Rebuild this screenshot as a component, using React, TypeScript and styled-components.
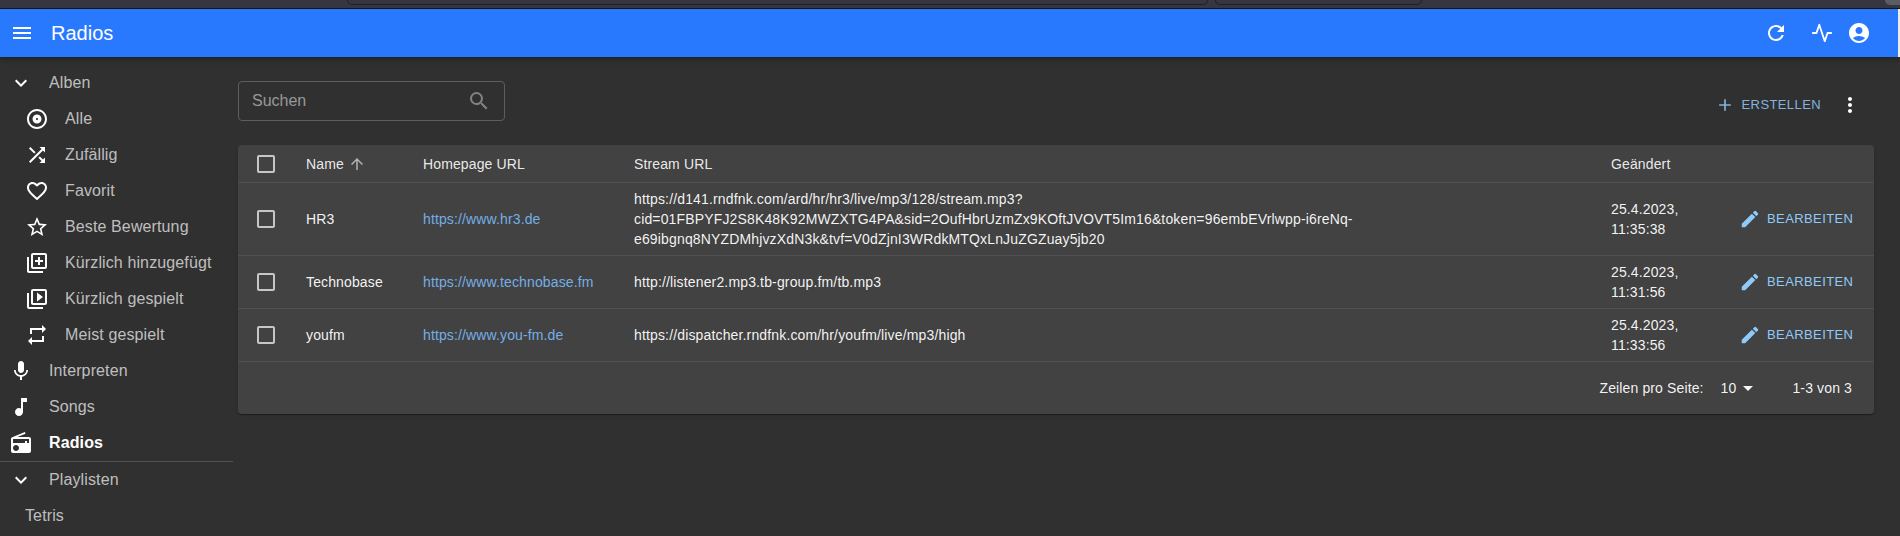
import React from "react";
import styled, { createGlobalStyle } from "styled-components";
import {
  MdMenu, MdRefresh, MdAccountCircle, MdExpandMore, MdOutlineAlbum, MdShuffle, MdFavoriteBorder,
  MdStarBorder, MdOutlineLibraryAdd, MdOutlineVideoLibrary, MdRepeat, MdMic, MdMusicNote, MdRadio,
  MdSearch, MdAdd, MdMoreVert, MdCheckBoxOutlineBlank, MdArrowUpward, MdEdit, MdArrowDropDown,
} from "react-icons/md";
import { FiActivity } from "react-icons/fi";

const Global = createGlobalStyle`
  html, body { margin: 0; padding: 0; height: 100%; overflow: hidden; background: #303030; }
  body { font-family: "Liberation Sans", Arial, sans-serif; color: #fff; }
  #root { height: 100%; }
`;

const Page = styled.div`
  height: 536px;
  display: flex;
  flex-direction: column;
  overflow: hidden;
`;

const BrowserStrip = styled.div`
  height: 8px;
  flex: none;
  background: #35363f;
  border-bottom: 1px solid #17181c;
  display: flex;
  align-items: flex-start;
  padding-left: 347px;
  gap: 7px;
  position: relative;
`;

const BrowserTab = styled.div<{ $w: number }>`
  width: ${(p) => p.$w}px;
  height: 5px;
  box-sizing: border-box;
  border: 1px solid #1f2026;
  border-top: none;
  border-radius: 0 0 5px 5px;
`;

const CornerShape = styled.span`
  position: absolute;
  top: 0;
  right: 0;
  width: 15px;
  height: 5px;
  background: #5c5d62;
  border-bottom-left-radius: 12px;
`;

const AppBar = styled.header`
  height: 48px;
  flex: none;
  background: #2979ff;
  border-right: 2px solid #ececec;
  display: flex;
  align-items: center;
  padding: 0 27px 0 10px;
  box-shadow: 0 2px 4px -1px rgba(0, 0, 0, 0.2), 0 4px 5px 0 rgba(0, 0, 0, 0.14);
  position: relative;
  z-index: 2;
`;

const Title = styled.h1`
  margin: 0 0 0 17px;
  font-size: 20px;
  font-weight: 400;
  line-height: 1;
  flex: 1;
`;

const BarIcon = styled.span<{ $gap?: number }>`
  display: flex;
  margin-left: ${(p) => p.$gap ?? 0}px;
  font-size: 24px;
`;

const Body = styled.div`
  flex: 1;
  display: flex;
  min-height: 0;
`;

const Sidebar = styled.nav`
  width: 233px;
  flex: none;
  padding-top: 8px;
`;

const MenuRow = styled.div<{ $nested?: boolean; $active?: boolean }>`
  height: 36px;
  display: flex;
  align-items: center;
  padding-left: ${(p) => (p.$nested ? 25 : 9)}px;
  font-size: 16px;
  letter-spacing: 0.12px;
  font-weight: ${(p) => (p.$active ? 700 : 400)};
  color: ${(p) => (p.$active ? "#fff" : "rgba(255,255,255,0.7)")};
  svg { flex: none; width: 24px; height: 24px; margin-right: 16px; color: #fff; }
`;

const PlainRow = styled(MenuRow)`
  padding-left: 25px;
`;

const SideDivider = styled.div`
  height: 1px;
  background: #515151;
`;

const Main = styled.main`
  flex: 1;
  min-width: 0;
  padding: 24px 26px 0 5px;
`;

const Actions = styled.div`
  height: 64px;
  display: flex;
  align-items: flex-start;
  justify-content: space-between;
`;

const SearchBox = styled.div`
  width: 267px;
  height: 40px;
  box-sizing: border-box;
  border: 1px solid #5e5e5e;
  border-radius: 4px;
  display: flex;
  align-items: center;
  justify-content: space-between;
  padding: 0 13px 0 13px;
  color: rgba(255, 255, 255, 0.5);
  font-size: 16px;
  svg { width: 24px; height: 24px; color: rgba(255,255,255,0.4); }
`;

const ToolRow = styled.div`
  display: flex;
  align-items: center;
  height: 47px;
`;

const TextButton = styled.span`
  display: flex;
  align-items: center;
  color: #90caf9;
  font-size: 13px;
  letter-spacing: 0.4px;
  text-transform: uppercase;
`;

const CreateButton = styled(TextButton)`
  gap: 7px;
  opacity: 0.85;
  margin-right: 17px;
  svg { width: 20px; height: 20px; }
`;

const EditButton = styled(TextButton)`
  gap: 6px;
  svg { width: 22px; height: 22px; }
`;

const Dots = styled.span`
  display: flex;
  margin-right: 12px;
  svg { width: 24px; height: 24px; color: #fff; }
`;

const Card = styled.section`
  background: #424242;
  border-radius: 4px;
  overflow: hidden;
  box-shadow: 0 2px 1px -1px rgba(0,0,0,.2), 0 1px 1px 0 rgba(0,0,0,.14), 0 1px 3px 0 rgba(0,0,0,.12);
`;

const Table = styled.table`
  width: 100%;
  border-collapse: collapse;
  table-layout: fixed;
  font-size: 14px;
  letter-spacing: 0.13px;
`;

const HeadCell = styled.th`
  height: 37px;
  padding: 0;
  text-align: left;
  font-weight: 400;
  color: rgba(255,255,255,0.9);
  border-bottom: 1px solid #515151;
  line-height: 1;
  vertical-align: middle;
`;

const Cell = styled.td`
  padding: 0;
  line-height: 20px;
  color: rgba(255,255,255,0.95);
  border-bottom: 1px solid #515151;
  vertical-align: middle;
`;

const BoxCell = styled(Cell)`
  padding-left: 16px;
  line-height: 0;
`;

const BoxHead = styled(HeadCell)`
  padding-left: 16px;
  line-height: 0;
`;

const Check = styled(MdCheckBoxOutlineBlank)`
  width: 24px;
  height: 24px;
  color: rgba(255,255,255,0.7);
`;

const Sort = styled.span`
  display: inline-flex;
  align-items: center;
  gap: 4px;
  svg { width: 18px; height: 18px; color: rgba(255,255,255,0.6); }
`;

const Link = styled.a`
  color: #75aee6;
  text-decoration: none;
`;

const Footer = styled.div`
  height: 52px;
  display: flex;
  align-items: center;
  justify-content: flex-end;
  padding-right: 22px;
  font-size: 14px;
  letter-spacing: 0.13px;
  color: rgba(255,255,255,0.95);
`;

const PageSize = styled.span`
  display: inline-flex;
  align-items: center;
  margin: 0 32px 0 17px;
  svg { width: 24px; height: 24px; }
`;

const nav: [React.ComponentType, string, boolean][] = [
  [MdOutlineAlbum, "Alle", true],
  [MdShuffle, "Zufällig", true],
  [MdFavoriteBorder, "Favorit", true],
  [MdStarBorder, "Beste Bewertung", true],
  [MdOutlineLibraryAdd, "Kürzlich hinzugefügt", true],
  [MdOutlineVideoLibrary, "Kürzlich gespielt", true],
  [MdRepeat, "Meist gespielt", true],
  [MdMic, "Interpreten", false],
  [MdMusicNote, "Songs", false],
];

const rows = [
  {
    name: "HR3",
    home: "https://www.hr3.de",
    stream: "https://d141.rndfnk.com/ard/hr/hr3/live/mp3/128/stream.mp3?cid=01FBPYFJ2S8K48K92MWZXTG4PA&sid=2OufHbrUzmZx9KOftJVOVT5Im16&token=96embEVrlwpp-i6reNq-e69ibgnq8NYZDMhjvzXdN3k&tvf=V0dZjnI3WRdkMTQxLnJuZGZuay5jb20",
    date: "25.4.2023, 11:35:38",
  },
  { name: "Technobase", home: "https://www.technobase.fm", stream: "http://listener2.mp3.tb-group.fm/tb.mp3", date: "25.4.2023, 11:31:56" },
  { name: "youfm", home: "https://www.you-fm.de", stream: "https://dispatcher.rndfnk.com/hr/youfm/live/mp3/high", date: "25.4.2023, 11:33:56" },
];

const RowShell = styled.tr<{ $h: number }>`
  height: ${(p) => p.$h}px;
`;

const Stream = styled.div`
  width: 780px;
  overflow-wrap: anywhere;
  letter-spacing: 0.15px;
`;

const DateText = styled.div`
  width: 90px;
`;

export default function App() {
  return (
    <Page>
      <Global />
      <BrowserStrip>
        <BrowserTab $w={861} />
        <BrowserTab $w={207} />
        <CornerShape />
      </BrowserStrip>
      <AppBar>
        <BarIcon><MdMenu /></BarIcon>
        <Title>Radios</Title>
        <BarIcon><MdRefresh /></BarIcon>
        <BarIcon $gap={23}><FiActivity size={22} /></BarIcon>
        <BarIcon $gap={14}><MdAccountCircle /></BarIcon>
      </AppBar>
      <Body>
        <Sidebar>
          <MenuRow><MdExpandMore />Alben</MenuRow>
          {nav.map(([I, label, nested]) => (
            <MenuRow key={label} $nested={nested}><I />{label}</MenuRow>
          ))}
          <MenuRow $active><MdRadio />Radios</MenuRow>
          <SideDivider />
          <MenuRow><MdExpandMore />Playlisten</MenuRow>
          <PlainRow>Tetris</PlainRow>
        </Sidebar>
        <Main>
          <Actions>
            <SearchBox>Suchen<MdSearch /></SearchBox>
            <ToolRow>
              <CreateButton><MdAdd />Erstellen</CreateButton>
              <Dots><MdMoreVert /></Dots>
            </ToolRow>
          </Actions>
          <Card>
            <Table>
              <colgroup>
                <col width={68} />
                <col width={117} />
                <col width={211} />
                <col width={977} />
                <col width={128} />
                <col />
              </colgroup>
              <thead>
                <tr>
                  <BoxHead><Check /></BoxHead>
                  <HeadCell><Sort>Name<MdArrowUpward /></Sort></HeadCell>
                  <HeadCell>Homepage URL</HeadCell>
                  <HeadCell>Stream URL</HeadCell>
                  <HeadCell>Geändert</HeadCell>
                  <HeadCell />
                </tr>
              </thead>
              <tbody>
                {rows.map((r, i) => (
                  <RowShell key={r.name} $h={i === 0 ? 73 : 53}>
                    <BoxCell><Check /></BoxCell>
                    <Cell>{r.name}</Cell>
                    <Cell><Link>{r.home}</Link></Cell>
                    <Cell><Stream>{r.stream}</Stream></Cell>
                    <Cell><DateText>{r.date}</DateText></Cell>
                    <Cell><EditButton><MdEdit />Bearbeiten</EditButton></Cell>
                  </RowShell>
                ))}
              </tbody>
            </Table>
            <Footer>
              Zeilen pro Seite:
              <PageSize>10<MdArrowDropDown /></PageSize>
              1-3 von 3
            </Footer>
          </Card>
        </Main>
      </Body>
    </Page>
  );
}
